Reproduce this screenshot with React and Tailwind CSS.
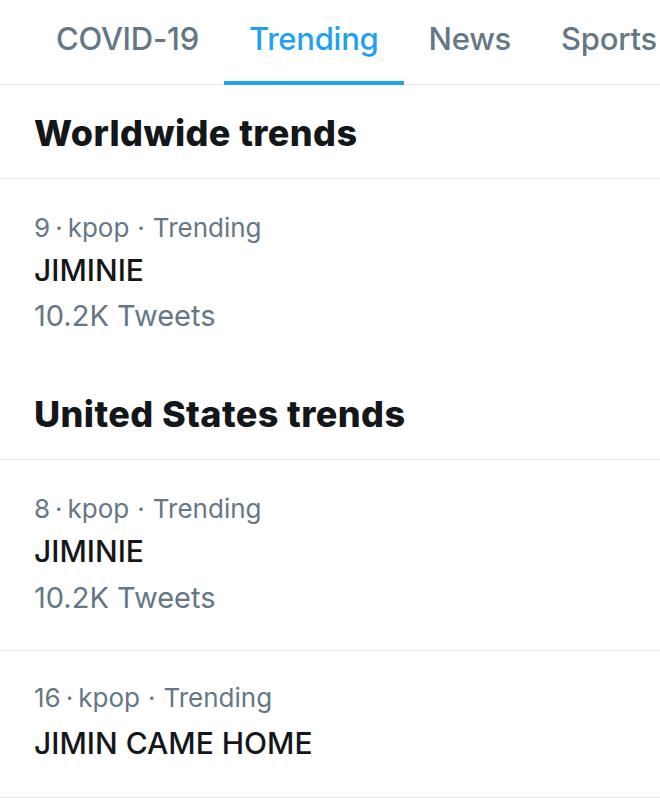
const tabs = ['COVID-19', 'Trending', 'News', 'Sports'];

function Meta({ rank }) {
  return (
    <div className="h-[42px] text-[26px] leading-[42px] text-[#657786]">
      {rank}
      <span className="px-[5px]">·</span>kpop<span className="px-[8px]">·</span>Trending
    </div>
  );
}

function Trend({ rank, name, tweets, className = '', nameGap = '', tweetsGap = 'mt-[4px]' }) {
  return (
    <div className={`pl-[34px] ${className}`}>
      <Meta rank={rank} />
      <div className={`h-[42px] text-[30px] font-medium leading-[42px] text-[#14171a] ${nameGap}`}>{name}</div>
      {tweets && (
        <div className={`h-[42px] text-[29px] leading-[42px] text-[#657786] ${tweetsGap}`}>{tweets}</div>
      )}
    </div>
  );
}

function SectionTitle({ children }) {
  return (
    <div className="flex h-[94px] items-center border-b border-[#e1e8ed] pl-[34px] pt-[2px]">
      <h2 className="text-[36px] font-extrabold tracking-[0.4px] text-[#14171a]">{children}</h2>
    </div>
  );
}

export default function App() {
  return (
    <div className="min-h-screen w-[660px] overflow-hidden bg-white font-['Inter',sans-serif]">
      {/* tab strip */}
      <div className="flex h-[85px] border-b border-[#e1e8ed] pl-[31px]">
        {tabs.map((t) => (
          <div
            key={t}
            className={`relative flex shrink-0 items-center px-[25px] pb-[5px] text-[31px] font-medium tracking-[-0.25px] ${
              t === 'Trending' ? 'text-[#1da1f2]' : 'text-[#657786]'
            }`}
          >
            {t}
            {t === 'Trending' && (
              <span className="absolute inset-x-0 bottom-[-1px] h-[4px] bg-[#1da1f2]" />
            )}
          </div>
        ))}
      </div>

      <SectionTitle>Worldwide trends</SectionTitle>
      <Trend rank="9" name="JIMINIE" tweets="10.2K Tweets" className="pt-[28px] pb-[29px]" />

      <SectionTitle>United States trends</SectionTitle>
      <Trend
        rank="8"
        name="JIMINIE"
        tweets="10.2K Tweets"
        tweetsGap="mt-[5px]"
        className="border-b border-[#e1e8ed] pt-[28px] pb-[31px]"
      />
      <Trend
        rank="16"
        name="JIMIN CAME HOME"
        nameGap="mt-[3px]"
        className="border-b border-[#e1e8ed] pt-[26px] pb-[33px]"
      />
    </div>
  );
}
